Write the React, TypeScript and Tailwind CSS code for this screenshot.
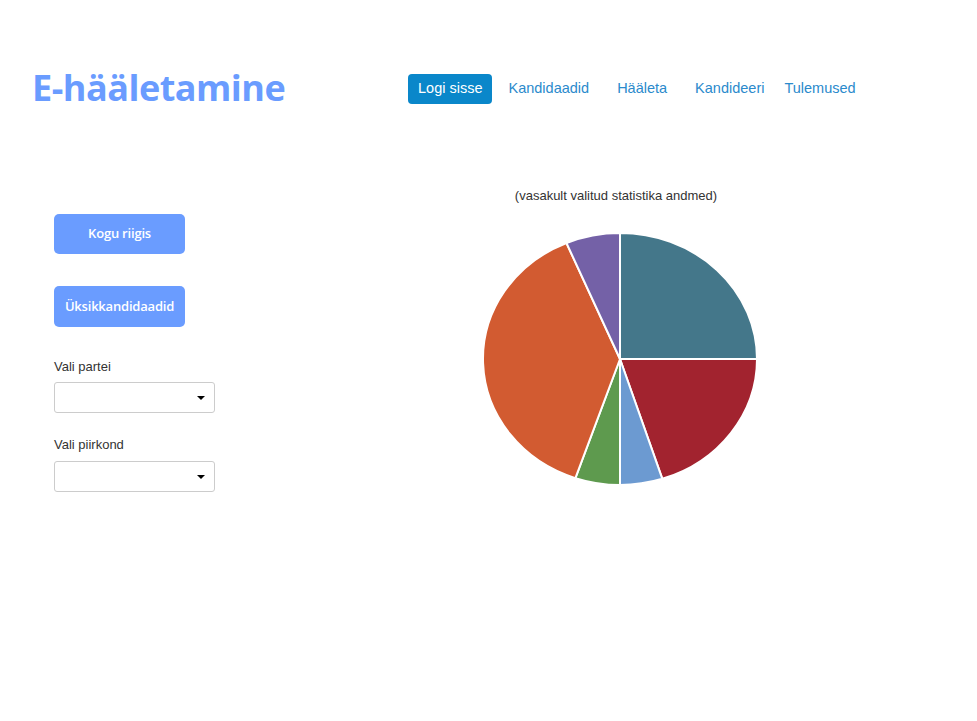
import React from "react";

const slices = [
  { from: 0, to: 90, color: "#44778A" },
  { from: 90, to: 162, color: "#A2232F" },
  { from: 162, to: 180, color: "#6C9AD1" },
  { from: 180, to: 199, color: "#5E9A4E" },
  { from: 199, to: 337, color: "#D25B31" },
  { from: 337, to: 360, color: "#7461A7" },
];

function Pie() {
  const cx = 140, cy = 128, rx = 137, ry = 126;
  const pt = (a: number) => {
    const r = (a * Math.PI) / 180;
    return [cx + rx * Math.sin(r), cy - ry * Math.cos(r)];
  };
  return (
    <svg width="280" height="258" viewBox="0 0 280 258">
      {slices.map((s, i) => {
        const [x1, y1] = pt(s.from);
        const [x2, y2] = pt(s.to);
        const large = s.to - s.from > 180 ? 1 : 0;
        const d = `M${cx},${cy} L${x1},${y1} A${rx},${ry} 0 ${large} 1 ${x2},${y2} Z`;
        return <path key={i} d={d} fill={s.color} stroke="#ffffff" strokeWidth="2" strokeLinejoin="round" />;
      })}
    </svg>
  );
}

function Select() {
  return (
    <div className="relative w-[161px] h-[31px] border border-[#cccccc] rounded-[3px] bg-white">
      <span className="absolute right-[9px] top-[13px] w-0 h-0 border-l-[4px] border-r-[4px] border-t-[4px] border-l-transparent border-r-transparent border-t-black" />
    </div>
  );
}

export default function App() {
  return (
    <div className="w-[977px] h-[721px] bg-white" style={{ fontFamily: '"Liberation Sans", Arial, sans-serif' }}>
      <header className="flex items-center pt-[65px]">
        <h1
          className="ml-[32px] w-[376px] text-[36px] leading-[46px] font-bold text-[#6A9CFF] tracking-[-0.5px]"
          style={{ fontFamily: '"Open Sans", sans-serif' }}
        >
          E-hääletamine
        </h1>
        <nav className="flex items-center text-[14.5px] text-[#2B8ACC] mt-[2px]">
          <span className="h-[30px] px-[10px] flex items-center rounded-[4px] bg-[#0A87CA] text-white">Logi sisse</span>
          <span className="ml-[16px]">Kandidaadid</span>
          <span className="ml-[28px]">Hääleta</span>
          <span className="ml-[28px]">Kandideeri</span>
          <span className="ml-[20px]">Tulemused</span>
        </nav>
      </header>
      <main className="flex mt-[69px]">
        <div className="ml-[54px] w-[240px] pt-[34px] flex flex-col">
          <button
            className="w-[131px] h-[40px] rounded-[5px] bg-[#6A9CFF] text-white text-[13px] font-semibold tracking-[-0.2px]"
            style={{ fontFamily: '"Open Sans", sans-serif' }}
          >
            Kogu riigis
          </button>
          <button
            className="mt-[32px] w-[131px] h-[41px] rounded-[5px] bg-[#6A9CFF] text-white text-[13px] font-semibold tracking-[-0.2px]"
            style={{ fontFamily: '"Open Sans", sans-serif' }}
          >
            Üksikkandidaadid
          </button>
          <label className="mt-[31px] text-[13px] text-[#333333] leading-[18px]">Vali partei</label>
          <div className="mt-[6px]"><Select /></div>
          <label className="mt-[23px] text-[13px] text-[#333333] leading-[18px]">Vali piirkond</label>
          <div className="mt-[7px]"><Select /></div>
        </div>
        <div className="ml-[172px] w-[300px] flex flex-col items-center">
          <p className="text-[13px] text-[#333333] leading-[16px] mt-[8px]">(vasakult valitud statistika andmed)</p>
          <div className="mt-[27px] ml-[8px]"><Pie /></div>
        </div>
      </main>
    </div>
  );
}
